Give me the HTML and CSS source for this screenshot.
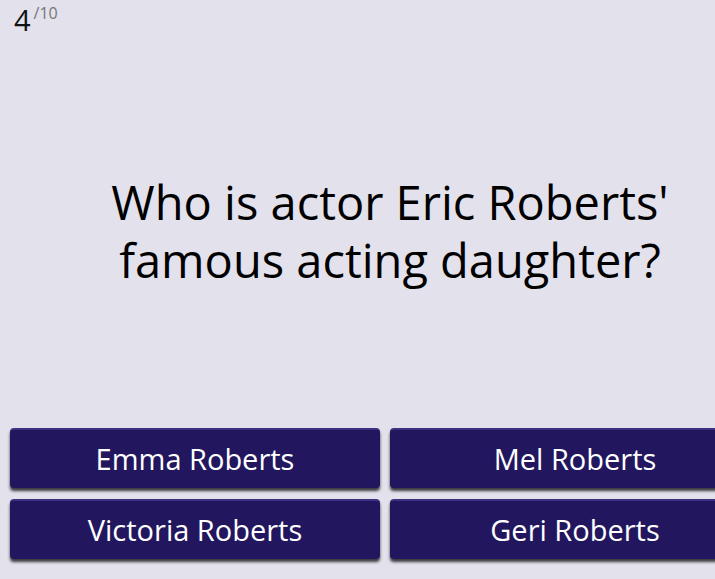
FILE: index.html
```html
<!DOCTYPE html>
<html>
	<head>
		<title>Quiz</title>
		<meta charset="UTF-8"/>
		<link rel="stylesheet" href="styles.css">
	</head>
	<body>
		<div class="quiz">
			<div class="counter">4<sup>/10</sup></div>

			<div class="question">
				<p>Who is actor Eric Roberts'<br>famous acting daughter?</p>
			</div>

			<div class="answers">
				<button type="button">Emma Roberts</button>
				<button type="button">Mel Roberts</button>
				<button type="button">Victoria Roberts</button>
				<button type="button">Geri Roberts</button>
			</div>
		</div>
	</body>
</html>
```

FILE: styles.css
```css
* {
  box-sizing: border-box;
  font-family: "Open Sans", "Noto Sans", sans-serif;
  font-variant-ligatures: none;
}

html, body {
  margin: 0;
  height: 100%;
  background: #e3e1ec;
  overflow: hidden;
}

.quiz {
  display: flex;
  flex-direction: column;
  height: 100%;
  width: 780px;
}

.counter {
  padding: 0 0 0 14px;
  font-size: 29px;
  line-height: 26px;
  height: 34px;
  color: #111;
}

.counter sup {
  font-size: 16px;
  color: #777;
  vertical-align: 12px;
  margin-left: 3px;
}

.question {
  flex: 1;
  display: flex;
  align-items: center;
  justify-content: center;
}

.question p {
  margin: 0;
  text-align: center;
  font-size: 47px;
  line-height: 58px;
  color: #000;
}

.answers {
  display: grid;
  grid-template-columns: 370px 370px;
  gap: 11px 10px;
  padding: 0 0 20px 10px;
}

.answers button {
  height: 60px;
  padding: 0 6px 2px;
  background: #22175e;
  border: none;
  border-top: 2px solid #3b3180;
  border-radius: 4px;
  box-shadow: 0 3px 3px rgba(0, 0, 0, 0.75);
  color: #fff;
  font-size: 29px;
  cursor: pointer;
}
```
